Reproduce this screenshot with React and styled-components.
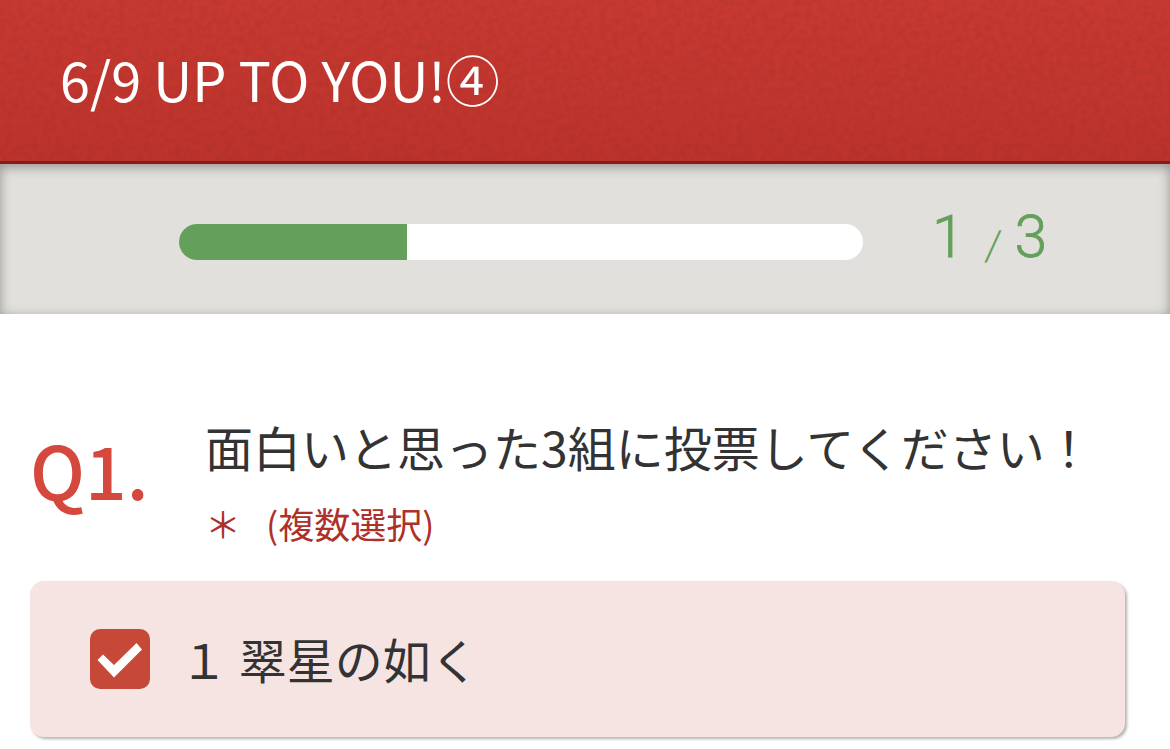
import styled, { createGlobalStyle } from "styled-components";

const GlobalStyle = createGlobalStyle`
  * {
    box-sizing: border-box;
  }

  body {
    margin: 0;
    min-height: 100vh;
    background: #ffffff;
    color: #333333;
    font-family: "Noto Sans CJK JP", sans-serif;
  }
`;

export default function App() {
  const page = 1;
  const pages = 3;

  return (
    <Page>
      <GlobalStyle />
      <Header>
        <Grain />
        <Title>6/9 UP TO YOU!④</Title>
      </Header>
      <ProgressSection>
        <Track>
          <Bar style={{ width: `${(page / pages) * 100}%` }} />
        </Track>
        <Count>
          <Digit>{page}</Digit>
          <Slash>/</Slash>
          <Digit>{pages}</Digit>
        </Count>
      </ProgressSection>
      <Question>
        <Number>Q1.</Number>
        <div>
          <Heading>面白いと思った3組に投票してください！</Heading>
          <Note>
            <span>＊</span>
            <span>(複数選択)</span>
          </Note>
        </div>
      </Question>
      <Option>
        <CheckBox>
          <CheckMark />
        </CheckBox>
        <OptionLabel>１ 翠星の如く</OptionLabel>
      </Option>
    </Page>
  );
}

function Grain() {
  return (
    <GrainSvg aria-hidden="true">
      <filter id="grain" x="0" y="0" width="100%" height="100%">
        <feTurbulence type="fractalNoise" baseFrequency="0.16" numOctaves="3" />
        <feColorMatrix values="0 0 0 0 0.2  0 0 0 0 0.02  0 0 0 0 0.02  1.2 0 0 0 -0.4" />
      </filter>
      <rect width="100%" height="100%" filter="url(#grain)" />
    </GrainSvg>
  );
}

function CheckMark() {
  return (
    <svg width="60" height="60" viewBox="0 0 60 60">
      <path d="M7.5 31L13 25.5L24 36L46.5 14L52 20.5L24 48.5Z" fill="#ffffff" />
    </svg>
  );
}

const Page = styled.main`
  height: 749px;
  overflow: hidden;
`;

const Header = styled.header`
  position: relative;
  height: 164px;
  padding: 39px 60px 0;
  background: linear-gradient(#c83a31, #bc332c);
  border-bottom: 3px solid #8a1a13;
`;

const GrainSvg = styled.svg`
  position: absolute;
  inset: 0;
  width: 100%;
  height: 100%;
  opacity: 0.26;
`;

const Title = styled.h1`
  position: relative;
  margin: 0;
  color: #ffffff;
  font-size: 54px;
  font-weight: 400;
  line-height: 80px;
`;

const ProgressSection = styled.section`
  display: flex;
  height: 150px;
  padding: 60px 0 0 179px;
  background: #e1e0dc;
  box-shadow: inset 0 3px 12px rgba(0, 0, 0, 0.35);
`;

const Track = styled.div`
  width: 684px;
  height: 36px;
  border-radius: 18px;
  background: #ffffff;
  overflow: hidden;
`;

const Bar = styled.div`
  height: 100%;
  background: #64a05c;
`;

const Count = styled.div`
  display: flex;
  align-items: baseline;
  height: 80px;
  margin: -27px 0 0 69px;
  color: #64a05c;
  font-family: Roboto, "Liberation Sans", sans-serif;
  font-weight: 300;
  line-height: 80px;
`;

const Digit = styled.span`
  font-size: 59px;
  -webkit-text-stroke: 0.8px #64a05c;
`;

const Slash = styled.span`
  margin: 0 13px 0 20px;
  font-size: 42px;
  transform: translateY(3px) skewX(-4deg);
`;

const Question = styled.section`
  display: grid;
  grid-template-columns: 175px 1fr;
  height: 267px;
  padding: 97px 0 0 30px;
`;

const Number = styled.strong`
  padding-top: 17px;
  color: #d5483d;
  font-size: 73px;
  font-weight: 500;
  line-height: 80px;
`;

const Heading = styled.h2`
  margin: 0;
  font-size: 48px;
  font-weight: 400;
  line-height: 70px;
  white-space: nowrap;
`;

const Note = styled.p`
  display: flex;
  gap: 25px;
  margin: 16px 0 0;
  color: #ad3029;
  font-size: 36px;
  line-height: 52px;
`;

const Option = styled.label`
  display: flex;
  align-items: center;
  width: 1095px;
  height: 156px;
  margin-left: 30px;
  padding-left: 60px;
  border-radius: 14px;
  background: #f6e4e2;
  box-shadow: 2px 2px 3px rgba(0, 0, 0, 0.3);
`;

const CheckBox = styled.span`
  width: 60px;
  height: 60px;
  border-radius: 10px;
  background: #c64838;
`;

const OptionLabel = styled.span`
  margin: -2px 0 0 30px;
  font-size: 48px;
  line-height: 70px;
`;
